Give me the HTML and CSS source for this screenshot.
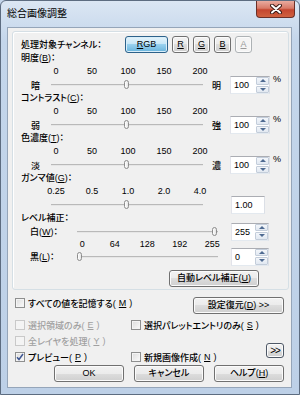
FILE: index.html
```html
<!DOCTYPE html>
<html lang="ja">
  <head>
    <meta charset="UTF-8" />
    <title>総合画像調整</title>
    <link rel="stylesheet" href="styles.css">
  </head>
  <body>
    <div class="window">
      <div class="titlebar">
        <span class="title">総合画像調整</span>
        <span class="close">
          <svg width="12" height="10" viewBox="0 0 12 10">
            <path d="M2 1.5 L10 8.5 M10 1.5 L2 8.5" stroke="#3a1a16" stroke-width="4" stroke-linecap="round" />
            <path d="M2 1.5 L10 8.5 M10 1.5 L2 8.5" stroke="#fff" stroke-width="2" stroke-linecap="round" />
          </svg>
        </span>
      </div>

      <div class="client">
        <div class="group">
          <!-- channel -->
          <div class="channel-row">
            <span class="channel-label">処理対象チャンネル：</span>
            <span class="btn ch rgb active"><u>R</u>GB</span>
            <span class="btn ch"><u>R</u></span>
            <span class="btn ch"><u>G</u></span>
            <span class="btn ch"><u>B</u></span>
            <span class="btn ch disabled"><u>A</u></span>
          </div>

          <!-- brightness -->
          <div class="section">
            <div class="sec-label">明度(<u>B</u>)：</div>
            <div class="scale"><span>0</span><span>50</span><span>100</span><span>150</span><span>200</span></div>
            <div class="slider-row">
              <span class="end-l">暗</span>
              <div class="track"><div class="range"><span class="thumb" style="left: 50%"></span></div></div>
              <span class="end-r">明</span>
              <div class="spin"><span class="val">100</span><span class="arrows"><span class="up"></span><span class="down"></span></span></div>
              <span class="pct">%</span>
            </div>
          </div>

          <!-- contrast -->
          <div class="section">
            <div class="sec-label">コントラスト(<u>C</u>)：</div>
            <div class="scale"><span>0</span><span>50</span><span>100</span><span>150</span><span>200</span></div>
            <div class="slider-row">
              <span class="end-l">弱</span>
              <div class="track"><div class="range"><span class="thumb" style="left: 50%"></span></div></div>
              <span class="end-r">強</span>
              <div class="spin"><span class="val">100</span><span class="arrows"><span class="up"></span><span class="down"></span></span></div>
              <span class="pct">%</span>
            </div>
          </div>

          <!-- saturation -->
          <div class="section">
            <div class="sec-label">色濃度(<u>T</u>)：</div>
            <div class="scale"><span>0</span><span>50</span><span>100</span><span>150</span><span>200</span></div>
            <div class="slider-row">
              <span class="end-l">淡</span>
              <div class="track"><div class="range"><span class="thumb" style="left: 50%"></span></div></div>
              <span class="end-r">濃</span>
              <div class="spin"><span class="val">100</span><span class="arrows"><span class="up"></span><span class="down"></span></span></div>
              <span class="pct">%</span>
            </div>
          </div>

          <!-- gamma -->
          <div class="section">
            <div class="sec-label">ガンマ値(<u>G</u>)：</div>
            <div class="scale"><span>0.25</span><span>0.5</span><span>1.0</span><span>2.0</span><span>4.0</span></div>
            <div class="slider-row">
              <span class="end-l"></span>
              <div class="track"><div class="range"><span class="thumb" style="left: 50%"></span></div></div>
              <span class="end-r"></span>
              <div class="spin gamma"><span class="val">1.00</span></div>
            </div>
          </div>

          <!-- levels -->
          <div class="sec-label level-title">レベル補正：</div>
          <div class="level-row">
            <span class="level-label">白(<u>W</u>)：</span>
            <div class="track level"><div class="range"><span class="thumb" style="left: 100%"></span></div></div>
            <div class="spin level-spin"><span class="val">255</span><span class="arrows"><span class="up"></span><span class="down"></span></span></div>
          </div>
          <div class="scale level-scale"><span>0</span><span>64</span><span>128</span><span>192</span><span>255</span></div>
          <div class="level-row">
            <span class="level-label">黒(<u>L</u>)：</span>
            <div class="track level"><div class="range"><span class="thumb" style="left: 0%"></span></div></div>
            <div class="spin level-spin"><span class="val">0</span><span class="arrows"><span class="up"></span><span class="down"></span></span></div>
          </div>
          <span class="btn auto">自動レベル補正(<u>U</u>)</span>
        </div>

        <div class="remember-row">
          <label class="opt"><span class="check"></span>すべての値を記憶する(<u>M</u>)</label>
          <span class="btn restore">設定復元(<u>D</u>) &gt;&gt;</span>
        </div>

        <div class="options">
          <label class="opt disabled"><span class="check"></span>選択領域のみ(<u>E</u>)</label>
          <label class="opt"><span class="check"></span>選択パレットエントリのみ(<u>S</u>)</label>
          <span></span>
          <label class="opt disabled"><span class="check"></span>全レイヤを処理(<u>Y</u>)</label>
          <span></span>
          <span></span>
          <label class="opt"><span class="check checked"><svg width="8" height="8" viewBox="0 0 8 8"><path d="M1 4.2 L3 6.5 L7 1" fill="none" stroke="#3f5793" stroke-width="1.5" /></svg></span>プレビュー(<u>P</u>)</label>
          <label class="opt"><span class="check"></span>新規画像作成(<u>N</u>)</label>
          <span class="btn more">&gt;&gt;</span>
        </div>

        <div class="actions">
          <span class="btn action">OK</span>
          <span class="btn action">キャンセル</span>
          <span class="btn action">ヘルプ(<u>H</u>)</span>
        </div>
      </div>
    </div>
  </body>
</html>
```

FILE: styles.css
```css
body {
  margin: 0;
  background: #c4d5ea;
  font-family: "Liberation Sans", "Noto Sans CJK JP", sans-serif;
  font-size: 9px;
  font-weight: 500;
  font-feature-settings: "palt";
  color: #000;
}

.window {
  width: 300px;
  height: 395px;
  box-sizing: border-box;
  border: 1px solid #5d6c80;
  border-radius: 6px 6px 0 0;
  background: linear-gradient(#dbe6f3, #c4d6eb 40px, #bdd0e7);
  overflow: hidden;
}

.titlebar {
  display: flex;
  height: 26px;
}

.title {
  padding: 6px 0 0 6px;
  font-size: 10px;
  font-weight: 400;
  line-height: 13px;
}

.close {
  margin-left: auto;
  margin-right: 4px;
  width: 39px;
  height: 17px;
  box-sizing: border-box;
  border: 1px solid #6b2f27;
  border-top: none;
  border-radius: 0 0 4px 4px;
  background: linear-gradient(#e9ab9f, #d87a68 45%, #c4462f 55%, #d0613f);
  display: flex;
  align-items: center;
  justify-content: center;
}

.client {
  margin: 0 7px 0 6px;
  height: 361px;
  box-sizing: border-box;
  border: 1px solid #95a5b9;
  background: #f0f0f0;
}

.group {
  margin: 3px 0 0 4px;
  width: 277px;
  height: 259px;
  box-sizing: border-box;
  border: 1px solid #d5dfe5;
  border-radius: 3px;
  box-shadow: inset 1px 1px 0 #fff;
  padding-top: 4px;
}

u {
  text-decoration: underline;
  text-underline-offset: 1px;
}

/* buttons */
.btn {
  display: flex;
  align-items: center;
  justify-content: center;
  box-sizing: border-box;
  height: 17px;
  border: 1px solid #707070;
  border-radius: 3px;
  background: linear-gradient(#f2f2f2, #ebebeb 50%, #dddddd 50%, #cfcfcf);
  box-shadow: inset 0 0 0 1px #fbfbfb;
  line-height: 1;
}

.channel-row {
  display: flex;
  align-items: center;
  gap: 4px;
  height: 16px;
}

.channel-label {
  width: 100px;
  padding-left: 8px;
}

.ch {
  width: 17px;
}

.ch.rgb {
  width: 43px;
}

.ch.active {
  border-color: #2c628b;
  background: linear-gradient(#e5f4fc, #c4e5f6 50%, #98d1ef 50%, #68b3db);
  box-shadow: inset 0 0 0 1px #d8eefa;
}

.ch.disabled {
  border-color: #adb2b5;
  background: #f4f4f4;
  color: #9a9a9a;
}

/* slider sections */
.section {
  height: 40px;
}

.sec-label {
  height: 13px;
  line-height: 13px;
  padding-left: 8px;
}

.scale {
  display: grid;
  grid-template-columns: repeat(5, 36px);
  margin-left: 25px;
  height: 13px;
  line-height: 13px;
  font-size: 9px;
  text-align: center;
}

.slider-row {
  display: flex;
  align-items: center;
  height: 14px;
}

.end-l {
  width: 20px;
  padding-left: 18px;
}

.end-r {
  width: 10px;
  margin-left: 9px;
}

.track {
  position: relative;
  width: 152px;
  height: 14px;
}

.track::before {
  content: "";
  position: absolute;
  left: 0;
  right: 0;
  top: 6px;
  height: 1px;
  background: #b9b9b9;
  border-bottom: 1px solid #e6e6e6;
}

.range {
  position: absolute;
  left: 4px;
  right: 4px;
  top: 0;
  bottom: 0;
}

.thumb {
  position: absolute;
  top: 2px;
  width: 5px;
  height: 9px;
  margin-left: -3px;
  box-sizing: border-box;
  border: 1px solid #8c8c8c;
  border-radius: 3px;
  background: linear-gradient(90deg, #ffffff, #e4e4e4);
}

.spin {
  display: flex;
  align-items: center;
  box-sizing: border-box;
  width: 40px;
  height: 18px;
  margin-left: 8px;
  border: 1px solid;
  border-color: #abadb3 #dbdfe6 #e3e9ef #e2e3ea;
  background: #fff;
}

.val {
  flex: 1;
  padding-left: 3px;
}

.arrows {
  display: flex;
  flex-direction: column;
  gap: 1px;
  width: 13px;
  height: 16px;
}

.arrows span {
  flex: 1;
  display: flex;
  align-items: center;
  justify-content: center;
  border: 1px solid #c3cdda;
  border-radius: 1px;
  background: linear-gradient(#f3f6fa, #e1e8f1);
}

.arrows .up::before {
  content: "";
  border-left: 3px solid transparent;
  border-right: 3px solid transparent;
  border-bottom: 3px solid #4f6b92;
}

.arrows .down::before {
  content: "";
  border-left: 3px solid transparent;
  border-right: 3px solid transparent;
  border-top: 3px solid #4f6b92;
}

.pct {
  align-self: flex-start;
  margin-left: 3px;
  margin-top: -4px;
}

.spin.gamma {
  width: 34px;
  margin-left: 9px;
}

/* levels */
.level-title {
  height: 13px;
}

.level-row {
  display: flex;
  align-items: center;
  height: 13px;
}

.level-label {
  width: 47px;
  padding-left: 17px;
}

.track.level {
  width: 141px;
}

.track.level .range {
  left: 3px;
  right: 3px;
}

.spin.level-spin {
  width: 38px;
  margin-left: 13px;
}

.scale.level-scale {
  grid-template-columns: repeat(5, 32.5px);
  margin-left: 53px;
  height: 12px;
  line-height: 12px;
}

.btn.auto {
  width: 90px;
  margin: 7px 0 0 156px;
}

/* lower part */
.remember-row {
  display: flex;
  justify-content: space-between;
  align-items: flex-start;
  padding: 0 7px;
  margin-top: 7px;
  height: 20px;
}

.remember-row .opt {
  margin-top: -2px;
}

.btn.restore {
  width: 91px;
}

.opt {
  display: flex;
  align-items: center;
  gap: 3px;
  height: 16px;
  white-space: nowrap;
}

.opt.disabled {
  color: #a0a0a0;
}

.check {
  display: flex;
  align-items: center;
  justify-content: center;
  width: 10px;
  height: 10px;
  box-sizing: border-box;
  border: 1px solid #8e8f8f;
  background: linear-gradient(135deg, #dcdcdc, #fbfbfb);
  box-shadow: inset 0 0 0 1px #f4f4f4;
}

.opt.disabled .check {
  border-color: #c9c9c9;
  background: #f4f4f4;
}

.options {
  display: grid;
  grid-template-columns: 116px 1fr auto;
  grid-auto-rows: 16px;
  padding: 0 7px;
}

.btn.more {
  width: 18px;
  height: 15px;
  margin-top: -6px;
  border-color: #4e5866;
  font-size: 10px;
  letter-spacing: -1px;
}

.actions {
  display: flex;
  justify-content: flex-end;
  gap: 10px;
  padding: 0 7px;
}

.btn.action {
  width: 70px;
}
```
